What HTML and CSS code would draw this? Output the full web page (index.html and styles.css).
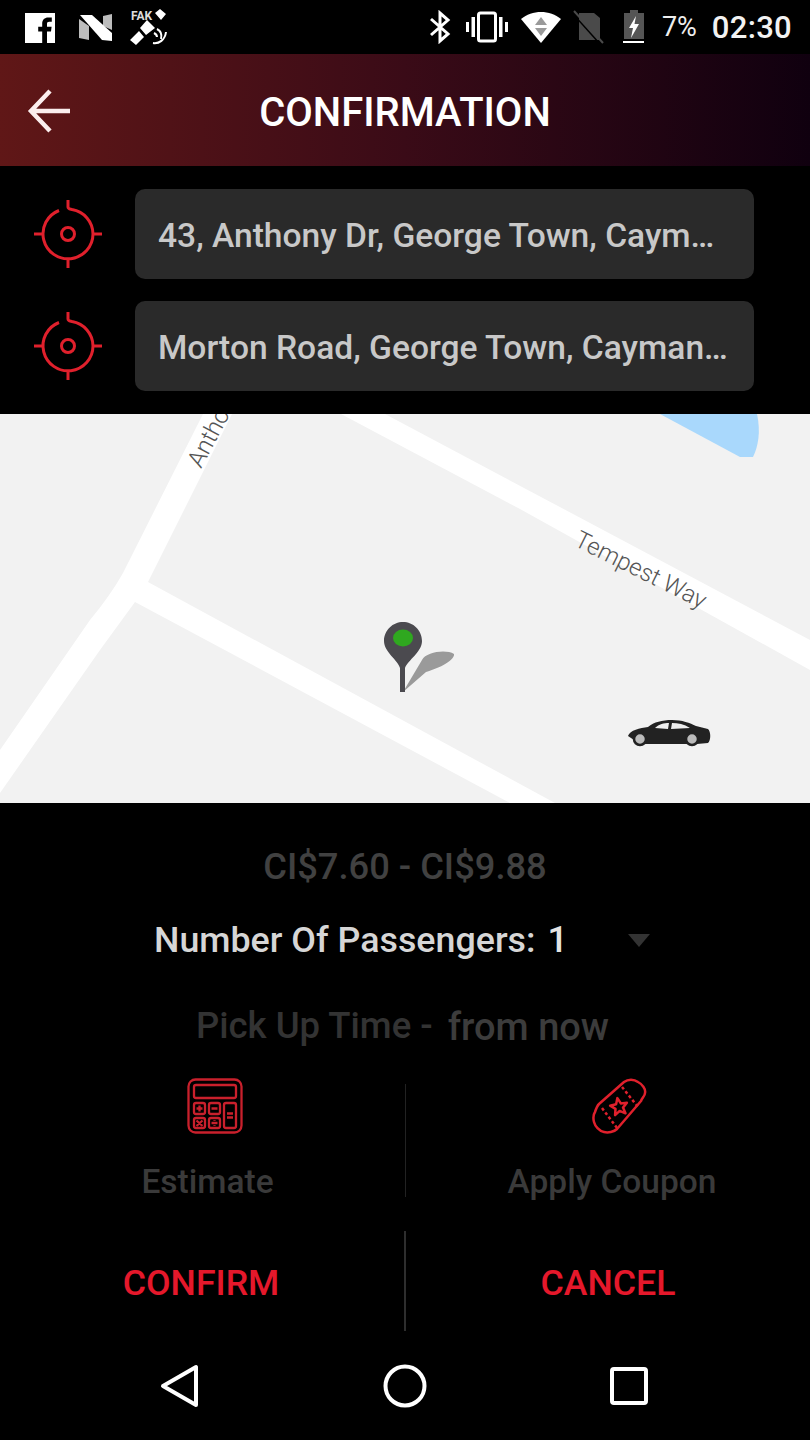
FILE: index.html
```html
<!DOCTYPE html>
<html lang="en">
<head>
<meta charset="utf-8">
<title>Confirmation</title>
<link rel="stylesheet" href="styles.css">
</head>
<body>
<div class="screen">
  <div class="status">
    <div class="status-left">
      <svg class="ic" width="30" height="30" viewBox="0 0 30 30"><path fill="#fff" d="M0 0H30V30H22V18.500H26L26.600 13.800H22V11C22 9.600 22.500 8.800 24.200 8.800H26.800V4.600C26.200 4.500 24.800 4.400 23.200 4.400C19.700 4.400 17.200 6.500 17.200 10.500V13.800H13.200V18.500H17.200V30H0Z"/></svg>
      <svg class="ic" width="34" height="28" viewBox="0 0 34 28"><path fill="#bdbdbd" d="M0 5L10 12V26L0 24Z"/><path fill="#bdbdbd" d="M24 12V2L33 0V16Z"/><path fill="#fff" d="M1 1H13L33 19V27L23 26Z"/></svg>
      <svg class="ic fake" width="38" height="38" viewBox="0 0 38 38"><text x="1" y="12" class="fake-t">FAK</text><path fill="#fff" d="M25 5L30 1L36 6L31 12ZM0 32L9 23L14 29L6 37ZM17 12L25 20L16 27L10 20Z"/><path fill="none" stroke="#fff" stroke-width="2" d="M24 25C26 26 27 27 27 29M27 21C31 23 32 27 31 31M23 35C29 36 35 32 36 24"/></svg>
    </div>
    <div class="status-right">
      <svg class="ic bt" width="22" height="34" viewBox="0 0 22 34"><path fill="none" stroke="#fff" stroke-width="3" d="M2 9L19 24L11 31V3L19 10L2 25"/></svg>
      <svg class="ic vib" width="42" height="32" viewBox="0 0 42 32"><rect x="12.500" y="2" width="17" height="28" rx="2" fill="none" stroke="#fff" stroke-width="3"/><path fill="#fff" d="M0 11H3V21H0ZM5.500 6H9V26H5.500ZM33 6H36.500V26H33ZM39 11H42V21H39Z"/></svg>
      <svg class="ic wifi" width="40" height="32" viewBox="0 0 40 32"><path fill="#fff" d="M20 32L0 8C11 -1.500 29 -1.500 40 8Z"/><path fill="#9a9a9a" d="M20 6L26 14H14ZM14 17H26L20 25Z"/></svg>
      <svg class="ic sim" width="32" height="34" viewBox="0 0 32 34"><path fill="#4a4a4a" d="M6 3H21L27 8V30H6Z"/><path stroke="#4a4a4a" stroke-width="2" d="M1 1L30 33"/><path stroke="#000" stroke-width="1.500" d="M0 4L27 34"/></svg>
      <svg class="ic batt" width="22" height="34" viewBox="0 0 22 34"><path fill="#555" d="M7 0H15V3H21V29H1V3H7Z"/><path fill="#fff" d="M0 31H21V33H0ZM13 6L6 18H10L8 28L16 14H11.500Z"/></svg>
      <span class="pct">7%</span>
      <span class="clock">02:30</span>
    </div>
  </div>

  <header class="appbar">
    <svg class="back" width="44" height="46" viewBox="0 0 44 46"><path fill="none" stroke="#fbeeee" stroke-width="4.500" d="M43 23H4M23 3L4 23L23 43"/></svg>
    <h1 class="title">CONFIRMATION</h1>
  </header>

  <section class="route">
    <div class="route-row">
      <svg class="target" width="68" height="68" viewBox="0 0 68 68"><g fill="none" stroke="#e0202c" stroke-width="3"><circle cx="34" cy="34" r="6.500"/><path d="M25 10.500A25 25 0 1 0 59 34M34 0V7C34 9 36 9 38 9.500A25 25 0 0 1 59 34H68M0 34H9M34 59V68"/></g></svg>
      <div class="field">43, Anthony Dr, George Town, Caym…</div>
    </div>
    <div class="route-row">
      <svg class="target" width="68" height="68" viewBox="0 0 68 68"><g fill="none" stroke="#e0202c" stroke-width="3"><circle cx="34" cy="34" r="6.500"/><path d="M25 10.500A25 25 0 1 0 59 34M34 0V7C34 9 36 9 38 9.500A25 25 0 0 1 59 34H68M0 34H9M34 59V68"/></g></svg>
      <div class="field">Morton Road, George Town, Cayman…</div>
    </div>
  </section>

  <svg class="map" width="810" height="389" viewBox="0 0 810 389">
    <rect width="810" height="389" fill="#f2f2f2"/>
    <path fill="#a9d8fc" d="M660 0L740 43H753C758 33 761 18 757 0Z"/>
    <path fill="#fff" d="M341 0H385L810 226V256L520 95L341 0Z"/>
    <path fill="#fff" d="M203 0H232L148 168L555 389H510L135 188L100 236L0 379V336L90 206Q110 182 123 159Z"/>
    <text class="road" transform="translate(573 131) rotate(26.500)">Tempest Way</text>
    <text class="road" transform="translate(201 55) rotate(-62)">Anthony Dr</text>
    <path fill="#9a9a9a" d="M403 278L422 246C426 238 446 235 454 240C455 246 440 254 426 258Z"/>
    <path fill="#4b4a4f" d="M403 208C393 208 384 216 384 227C384 238 398 246 400 254V278H405V254C408 246 422 238 422 227C422 216 413 208 403 208Z"/>
    <ellipse cx="403" cy="224" rx="10" ry="8.500" fill="#2fa81f"/>
    <path fill="#222" d="M628 322C630 316 640 314 648 313C654 308 662 306 672 306C682 306 690 309 696 312L708 315C711 318 711 326 708 329L697 330H640Z"/>
    <path fill="#eee" d="M655 314C659 310 664 309 669 309L668 315ZM672 309C678 309 684 310 690 314L671 315Z"/>
    <circle cx="640" cy="325" r="6" fill="#bbb" stroke="#222" stroke-width="2.500"/>
    <circle cx="692" cy="325" r="6" fill="#bbb" stroke="#222" stroke-width="2.500"/>
  </svg>

  <section class="details">
    <div class="price">CI$7.60 - CI$9.88</div>
    <div class="passengers">
      <span class="pass-label">Number Of Passengers:</span>
      <span class="pass-num">1</span>
      <span class="caret"></span>
    </div>
    <div class="pickup">
      <span class="pick-label">Pick Up Time -</span>
      <span class="pick-val">from now</span>
    </div>
  </section>

  <section class="tools">
    <div class="tool">
      <svg width="56" height="56" viewBox="0 0 56 56"><g fill="none" stroke="#c9202c" stroke-width="2.300"><rect x="1.500" y="1.500" width="53" height="53" rx="7"/><rect x="7" y="7" width="42" height="13" rx="2"/><rect x="7" y="25" width="11" height="11" rx="2"/><rect x="22" y="25" width="11" height="11" rx="2"/><rect x="7" y="40" width="11" height="10" rx="2"/><rect x="22" y="40" width="11" height="10" rx="2"/><rect x="37" y="25" width="12" height="25" rx="2"/><path d="M9.500 30.500H15.500M12.500 27.500V33.500M24.500 30.500H30.500M9.500 42.500L15.500 48M15.500 42.500L9.500 48M24.500 45H30.500M27.500 42V42.800M27.500 47.200V48M40 35.500H46M40 39.500H46"/></g></svg>
      <span class="tool-label">Estimate</span>
    </div>
    <div class="tool tool-split">
      <svg width="58" height="56" viewBox="0 0 58 56"><g fill="none" stroke="#e0202c" stroke-width="2.500" stroke-linejoin="round"><path d="M9 26L34 4C38 1 44 1 48 4C52 6 56 11 55 15C55 18 52 20 51 23L27 51C24 54 18 55 14 54C9 53 5 48 4 44C3 40 3 37 5 34C6 31 7 28 9 26Z"/><path stroke-dasharray="3 2.500" d="M32 9L48 29M12 30L27 50"/><path d="M27.400 20.100L30.800 25.400L36.900 24.800L33 29.600L35.500 35.300L29.700 32.900L25.100 37.100L25.500 30.900L20.100 27.700L26.100 26.200Z"/></g></svg>
      <span class="tool-label">Apply Coupon</span>
    </div>
  </section>

  <section class="actions">
    <button class="action">CONFIRM</button>
    <button class="action action-split">CANCEL</button>
  </section>

  <nav class="navbar">
    <svg class="nav-back" width="40" height="44" viewBox="0 0 40 44"><path fill="none" stroke="#fff" stroke-width="4" stroke-linejoin="round" d="M36 3V41L3 22Z"/></svg>
    <svg class="nav-home" width="44" height="44" viewBox="0 0 44 44"><circle cx="22" cy="22" r="19.500" fill="none" stroke="#fff" stroke-width="4"/></svg>
    <svg class="nav-recent" width="38" height="38" viewBox="0 0 38 38"><rect x="2" y="2" width="34" height="34" rx="2" fill="none" stroke="#fff" stroke-width="4"/></svg>
  </nav>
</div>
</body>
</html>
```
FILE: styles.css
```css
* { box-sizing: border-box; }
html, body { margin: 0; padding: 0; background: #000; }
body { font-family: Roboto, "Noto Sans", sans-serif; }
.screen { width: 810px; height: 1440px; background: #000; display: flex; flex-direction: column; overflow: hidden; }
.ic { display: block; }

.status { height: 54px; display: flex; justify-content: space-between; align-items: center; padding: 0 18px 0 25px; }
.status-left { display: flex; align-items: center; gap: 24px; padding-top: 2px; }
.status-left .fake { margin-left: -7px; margin-top: -2px; }
.fake-t { font-family: Roboto, sans-serif; font-size: 12px; font-weight: 700; fill: #ddd; }
.status-right { display: flex; align-items: center; }
.bt { margin-right: 15px; }
.vib { margin-right: 13px; }
.wifi { margin-right: 12px; }
.sim { margin-right: 18px; }
.batt { margin-right: 17px; }
.pct { font-size: 27px; color: #eee; font-weight: 400; margin-right: 15px; }
.clock { font-size: 31px; color: #f2f2f2; font-weight: 500; letter-spacing: 0.3px; }

.appbar { height: 112px; display: flex; align-items: center; justify-content: center; position: relative; background: linear-gradient(90deg, #601717 0%, #3a0b17 50%, #10000f 100%); }
.back { position: absolute; left: 27px; top: 34px; }
.title { margin: 6px 0 0; color: #fff; font-size: 40px; font-weight: 500; line-height: 1; }

.route { height: 248px; padding: 23px 56px 23px 34px; display: flex; flex-direction: column; gap: 22px; }
.route-row { display: flex; align-items: center; gap: 33px; height: 90px; }
.target { flex: none; }
.field { flex: 1; min-width: 0; height: 90px; line-height: 93px; background: #2a2a2a; border-radius: 10px; padding: 0 0 0 23px; color: #c8c8c8; font-size: 33.600px; font-weight: 500; white-space: nowrap; }

.map { display: block; flex: none; }
.road { font-family: Roboto, sans-serif; font-size: 24px; font-weight: 300; fill: #555; }

.details { display: flex; flex-direction: column; align-items: center; padding-top: 42px; }
.price { font-size: 36.300px; font-weight: 500; color: #414141; line-height: 44px; }
.passengers { display: flex; align-items: center; margin-top: 29px; height: 44px; width: 100%; padding-left: 154px; }
.pass-label { font-size: 35.800px; font-weight: 500; color: #d6d6d6; }
.pass-num { font-size: 36px; font-weight: 500; color: #e4e4e4; margin-left: 12px; }
.caret { width: 0; height: 0; border-left: 11px solid transparent; border-right: 11px solid transparent; border-top: 13px solid #333; margin-left: 60px; }
.pickup { display: flex; align-items: center; margin-top: 41px; height: 44px; padding-right: 5px; }
.pick-label { font-size: 36.500px; font-weight: 500; color: #333; }
.pick-val { font-size: 38px; font-weight: 500; color: #3c3c3c; margin-left: 15px; padding-top: 3px; }

.tools { display: flex; margin-top: 37px; height: 124px; }
.tool { flex: none; width: 405px; padding-left: 10px; display: flex; flex-direction: column; align-items: center; height: 124px; }
.tool-split { border-left: 1px solid #222; height: 113px; padding-left: 8px; }
.tool svg { display: block; margin: -6px 0 0 14px; flex: none; }
.tool-label { font-size: 33.500px; font-weight: 500; color: #3a3a3a; line-height: 40px; margin-top: 28px; }

.actions { display: flex; margin-top: 23px; height: 100px; }
.action { flex: none; width: 404px; background: none; border: 0; padding: 4px 2px 0 0; font-family: inherit; font-size: 35.700px; font-weight: 500; color: #e5182b; }
.action-split { width: 406px; border-left: 2px solid #2e2e2e; padding: 4px 0 0; }

.navbar { flex: 1; display: flex; align-items: center; }
.nav-back { margin-left: 160px; }
.nav-home { margin-left: 183px; }
.nav-recent { margin-left: 183px; }
```
